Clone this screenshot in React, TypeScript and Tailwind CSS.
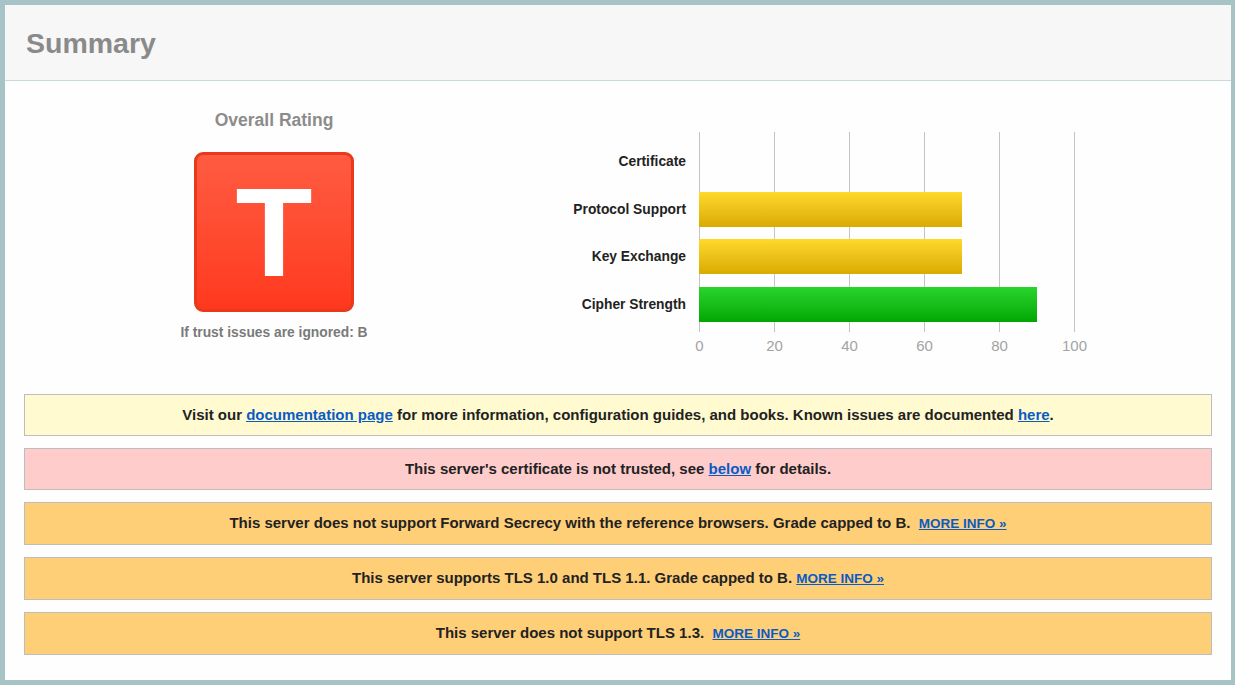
import React from "react";

const F = { fontFamily: '"Liberation Sans", Arial, sans-serif' };

function Link({ children, small }: { children: React.ReactNode; small?: boolean }) {
  return (
    <a className={`text-[#0a5bc4] underline ${small ? "text-[13.5px]" : ""}`} href="#">
      {children}
    </a>
  );
}

const rows = [
  { label: "Certificate", value: 0, kind: "none" },
  { label: "Protocol Support", value: 70, kind: "yellow" },
  { label: "Key Exchange", value: 70, kind: "yellow" },
  { label: "Cipher Strength", value: 90, kind: "green" },
];

export default function App() {
  return (
    <div style={F} className="w-[1235px] h-[685px] overflow-hidden">
      <div className="w-[1235px] h-[685px] border-[#a6c3c6] border-l-[5px] border-t-[5px] border-b-[5px] border-r-[4px] bg-[#fefefe] flex flex-col">
        <div className="h-[76px] bg-[#f7f7f7] border-b border-[#c9d9d9] flex items-center pl-[21px]">
          <h1 className="text-[28.5px] font-bold text-[#8a8a8a] leading-none pt-[2px]">Summary</h1>
        </div>
        <div className="flex pt-[28px] h-[313px]">
          <div className="w-[538px] flex flex-col items-center">
            <div className="text-[17.5px] font-bold text-[#8c8c8c] leading-[22px]">Overall Rating</div>
            <div className="mt-[21px] w-[160px] h-[160px] rounded-[9px] border-[3px] border-[#e8391c] bg-gradient-to-b from-[#ff5b41] to-[#ff381c] flex items-center justify-center">
              <span className="text-white font-bold text-[126px] leading-none mt-[2px]">T</span>
            </div>
            <div className="mt-[11px] text-[13.8px] font-bold text-[#7a7a7a]">If trust issues are ignored: B</div>
          </div>
          <div className="flex pt-[23px]">
            <div className="w-[143px] pt-[7px] flex flex-col">
              {rows.map((r) => (
                <div key={r.label} className="h-[47.5px] flex items-center justify-end text-[13.8px] font-bold text-[#222]">
                  {r.label}
                </div>
              ))}
            </div>
            <div className="ml-[13px] w-[375px] h-[200px] relative pt-[6px]">
              {[0, 20, 40, 60, 80, 100].map((t) => (
                <React.Fragment key={t}>
                  <div
                    className="absolute top-0 h-[200px] w-px bg-[#c4c4c4]"
                    style={{ left: `${t * 3.75}px` }}
                  />
                  <div
                    className="absolute top-[206px] text-[15px] text-[#a3a3a3] -translate-x-1/2 leading-none"
                    style={{ left: `${t * 3.75 + 0.5}px` }}
                  >
                    {t}
                  </div>
                </React.Fragment>
              ))}
              {rows.map((r) => (
                <div key={r.label} className="h-[47.5px] flex items-center relative">
                  {r.value > 0 && (
                    <div
                      className={`h-[35px] ${
                        r.kind === "green"
                          ? "bg-gradient-to-b from-[#28d52b] to-[#00a700]"
                          : "bg-gradient-to-b from-[#ffd92b] to-[#d9ab00]"
                      }`}
                      style={{ width: `${r.value * 3.75}px` }}
                    />
                  )}
                </div>
              ))}
            </div>
          </div>
        </div>
        <div className="px-[19px] flex flex-col gap-[12px] text-[15px] font-bold text-[#222]">
          <div className="h-[42px] border border-[#bdbdbd] bg-[#fffad0] flex items-center justify-center">
            <span>
              Visit our <Link>documentation page</Link> for more information, configuration guides, and books. Known issues are documented <Link>here</Link>.
            </span>
          </div>
          <div className="h-[42px] border border-[#bdbdbd] bg-[#ffcccc] flex items-center justify-center">
            <span>
              This server's certificate is not trusted, see <Link>below</Link> for details.
            </span>
          </div>
          <div className="h-[43px] border border-[#bdbdbd] bg-[#ffcf78] flex items-center justify-center">
            <span className="whitespace-pre">
              This server does not support Forward Secrecy with the reference browsers. Grade capped to B.{"  "}
              <Link small>MORE INFO »</Link>
            </span>
          </div>
          <div className="h-[43px] border border-[#bdbdbd] bg-[#ffcf78] flex items-center justify-center">
            <span className="whitespace-pre">
              This server supports TLS 1.0 and TLS 1.1. Grade capped to B. <Link small>MORE INFO »</Link>
            </span>
          </div>
          <div className="h-[43px] border border-[#bdbdbd] bg-[#ffcf78] flex items-center justify-center">
            <span className="whitespace-pre">
              This server does not support TLS 1.3.{"  "}
              <Link small>MORE INFO »</Link>
            </span>
          </div>
        </div>
      </div>
    </div>
  );
}
